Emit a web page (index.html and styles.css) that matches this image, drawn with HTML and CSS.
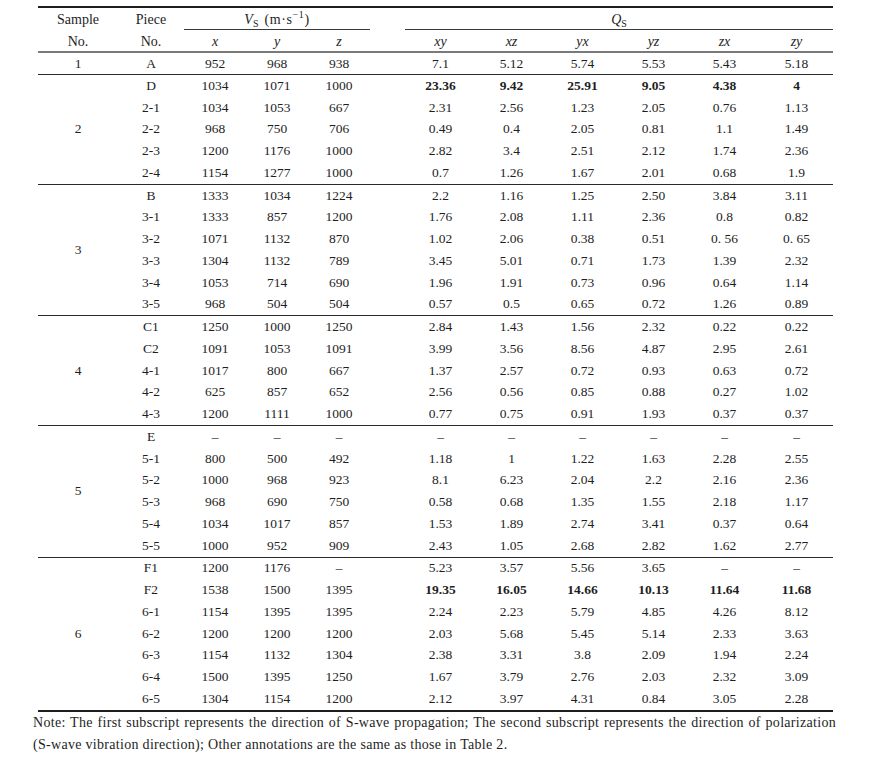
FILE: index.html
```html
<!DOCTYPE html>
<html lang="en">
<head>
<meta charset="utf-8">
<title>Table</title>
<link rel="stylesheet" href="styles.css">
</head>
<body>
<div class="page">
<table class="data">
<colgroup>
<col class="c-sample"><col class="c-piece"><col class="c-v"><col class="c-v"><col class="c-v"><col class="c-gap"><col class="c-q"><col class="c-q"><col class="c-q"><col class="c-q"><col class="c-q"><col class="c-qlast">
</colgroup>
<thead>
<tr class="h1">
<th>Sample</th><th>Piece</th><th colspan="3" class="cmid"><i>V</i><sub>S</sub><span class="unit">(m·s<sup>−1</sup>)</span></th><th></th><th colspan="6" class="cmid"><i>Q</i><sub>S</sub></th>
</tr>
<tr class="h2">
<th>No.</th><th>No.</th><th><i>x</i></th><th><i>y</i></th><th><i>z</i></th><th></th><th><i>xy</i></th><th><i>xz</i></th><th><i>yx</i></th><th><i>yz</i></th><th><i>zx</i></th><th><i>zy</i></th>
</tr>
</thead>
<tbody class="first">
<tr><td>1</td><td>A</td><td>952</td><td>968</td><td>938</td><td></td><td>7.1</td><td>5.12</td><td>5.74</td><td>5.53</td><td>5.43</td><td>5.18</td></tr>
</tbody>
<tbody>
<tr><td rowspan="5">2</td><td>D</td><td>1034</td><td>1071</td><td>1000</td><td></td><td class="b">23.36</td><td class="b">9.42</td><td class="b">25.91</td><td class="b">9.05</td><td class="b">4.38</td><td class="b">4</td></tr>
<tr><td>2-1</td><td>1034</td><td>1053</td><td>667</td><td></td><td>2.31</td><td>2.56</td><td>1.23</td><td>2.05</td><td>0.76</td><td>1.13</td></tr>
<tr><td>2-2</td><td>968</td><td>750</td><td>706</td><td></td><td>0.49</td><td>0.4</td><td>2.05</td><td>0.81</td><td>1.1</td><td>1.49</td></tr>
<tr><td>2-3</td><td>1200</td><td>1176</td><td>1000</td><td></td><td>2.82</td><td>3.4</td><td>2.51</td><td>2.12</td><td>1.74</td><td>2.36</td></tr>
<tr><td>2-4</td><td>1154</td><td>1277</td><td>1000</td><td></td><td>0.7</td><td>1.26</td><td>1.67</td><td>2.01</td><td>0.68</td><td>1.9</td></tr>
</tbody>
<tbody>
<tr><td rowspan="6">3</td><td>B</td><td>1333</td><td>1034</td><td>1224</td><td></td><td>2.2</td><td>1.16</td><td>1.25</td><td>2.50</td><td>3.84</td><td>3.11</td></tr>
<tr><td>3-1</td><td>1333</td><td>857</td><td>1200</td><td></td><td>1.76</td><td>2.08</td><td>1.11</td><td>2.36</td><td>0.8</td><td>0.82</td></tr>
<tr><td>3-2</td><td>1071</td><td>1132</td><td>870</td><td></td><td>1.02</td><td>2.06</td><td>0.38</td><td>0.51</td><td>0. 56</td><td>0. 65</td></tr>
<tr><td>3-3</td><td>1304</td><td>1132</td><td>789</td><td></td><td>3.45</td><td>5.01</td><td>0.71</td><td>1.73</td><td>1.39</td><td>2.32</td></tr>
<tr><td>3-4</td><td>1053</td><td>714</td><td>690</td><td></td><td>1.96</td><td>1.91</td><td>0.73</td><td>0.96</td><td>0.64</td><td>1.14</td></tr>
<tr><td>3-5</td><td>968</td><td>504</td><td>504</td><td></td><td>0.57</td><td>0.5</td><td>0.65</td><td>0.72</td><td>1.26</td><td>0.89</td></tr>
</tbody>
<tbody>
<tr><td rowspan="5">4</td><td>C1</td><td>1250</td><td>1000</td><td>1250</td><td></td><td>2.84</td><td>1.43</td><td>1.56</td><td>2.32</td><td>0.22</td><td>0.22</td></tr>
<tr><td>C2</td><td>1091</td><td>1053</td><td>1091</td><td></td><td>3.99</td><td>3.56</td><td>8.56</td><td>4.87</td><td>2.95</td><td>2.61</td></tr>
<tr><td>4-1</td><td>1017</td><td>800</td><td>667</td><td></td><td>1.37</td><td>2.57</td><td>0.72</td><td>0.93</td><td>0.63</td><td>0.72</td></tr>
<tr><td>4-2</td><td>625</td><td>857</td><td>652</td><td></td><td>2.56</td><td>0.56</td><td>0.85</td><td>0.88</td><td>0.27</td><td>1.02</td></tr>
<tr><td>4-3</td><td>1200</td><td>1111</td><td>1000</td><td></td><td>0.77</td><td>0.75</td><td>0.91</td><td>1.93</td><td>0.37</td><td>0.37</td></tr>
</tbody>
<tbody>
<tr><td rowspan="6">5</td><td>E</td><td>–</td><td>–</td><td>–</td><td></td><td>–</td><td>–</td><td>–</td><td>–</td><td>–</td><td>–</td></tr>
<tr><td>5-1</td><td>800</td><td>500</td><td>492</td><td></td><td>1.18</td><td>1</td><td>1.22</td><td>1.63</td><td>2.28</td><td>2.55</td></tr>
<tr><td>5-2</td><td>1000</td><td>968</td><td>923</td><td></td><td>8.1</td><td>6.23</td><td>2.04</td><td>2.2</td><td>2.16</td><td>2.36</td></tr>
<tr><td>5-3</td><td>968</td><td>690</td><td>750</td><td></td><td>0.58</td><td>0.68</td><td>1.35</td><td>1.55</td><td>2.18</td><td>1.17</td></tr>
<tr><td>5-4</td><td>1034</td><td>1017</td><td>857</td><td></td><td>1.53</td><td>1.89</td><td>2.74</td><td>3.41</td><td>0.37</td><td>0.64</td></tr>
<tr><td>5-5</td><td>1000</td><td>952</td><td>909</td><td></td><td>2.43</td><td>1.05</td><td>2.68</td><td>2.82</td><td>1.62</td><td>2.77</td></tr>
</tbody>
<tbody class="last">
<tr><td rowspan="7">6</td><td>F1</td><td>1200</td><td>1176</td><td>–</td><td></td><td>5.23</td><td>3.57</td><td>5.56</td><td>3.65</td><td>–</td><td>–</td></tr>
<tr><td>F2</td><td>1538</td><td>1500</td><td>1395</td><td></td><td class="b">19.35</td><td class="b">16.05</td><td class="b">14.66</td><td class="b">10.13</td><td class="b">11.64</td><td class="b">11.68</td></tr>
<tr><td>6-1</td><td>1154</td><td>1395</td><td>1395</td><td></td><td>2.24</td><td>2.23</td><td>5.79</td><td>4.85</td><td>4.26</td><td>8.12</td></tr>
<tr><td>6-2</td><td>1200</td><td>1200</td><td>1200</td><td></td><td>2.03</td><td>5.68</td><td>5.45</td><td>5.14</td><td>2.33</td><td>3.63</td></tr>
<tr><td>6-3</td><td>1154</td><td>1132</td><td>1304</td><td></td><td>2.38</td><td>3.31</td><td>3.8</td><td>2.09</td><td>1.94</td><td>2.24</td></tr>
<tr><td>6-4</td><td>1500</td><td>1395</td><td>1250</td><td></td><td>1.67</td><td>3.79</td><td>2.76</td><td>2.03</td><td>2.32</td><td>3.09</td></tr>
<tr><td>6-5</td><td>1304</td><td>1154</td><td>1200</td><td></td><td>2.12</td><td>3.97</td><td>4.31</td><td>0.84</td><td>3.05</td><td>2.28</td></tr>
</tbody>
</table>
<p class="note">Note: The first subscript represents the direction of S-wave propagation; The second subscript represents the direction of polarization (S-wave vibration direction); Other annotations are the same as those in Table 2.</p>
</div>
</body>
</html>
```
FILE: styles.css
```css
html, body {
  margin: 0;
  padding: 0;
  background: #fff;
}
body {
  font-family: "Liberation Serif", "Times New Roman", serif;
  font-size: 13.5px;
  color: #1e1e1e;
}
.page {
  padding: 6px 0 0 33px;
  width: 803px;
}
.data {
  margin-left: 5px;
  width: 795px;
  table-layout: fixed;
  border-collapse: collapse;
  border-top: 2px solid #1e1e1e;
}
.c-sample { width: 80px; }
.c-piece { width: 66px; }
.c-v { width: 62px; }
.c-gap { width: 35px; }
.c-q { width: 71px; }
.c-qlast { width: 73px; }
.data th, .data td {
  padding: 0;
  height: 21.75px;
  line-height: 20px;
  text-align: center;
  font-weight: normal;
  white-space: nowrap;
  vertical-align: middle;
}
.data thead th {
  height: 21px;
  padding-top: 2px;
  line-height: 19px;
  box-sizing: border-box;
  font-size: 14px;
}
.data tbody.first td {
  height: 21px;
}
.data th.cmid {
  border-bottom: 1px solid #3a3a3a;
}
.data thead {
  border-bottom: 2px solid #7a7a7a;
}
.data tbody {
  border-bottom: 1px solid #2a2a2a;
}
.data tbody.last {
  border-bottom: 2px solid #1e1e1e;
}
.data td.b {
  font-weight: bold;
}
.data sub {
  font-size: 10px;
  vertical-align: -3px;
  line-height: 0;
}
.data sup {
  font-size: 10px;
  vertical-align: 6px;
  line-height: 0;
}
.data .unit {
  margin-left: 6px;
  letter-spacing: 0.6px;
}
.data i {
  font-style: italic;
}
.note {
  margin: 0;
  font-size: 14px;
  letter-spacing: 0.3px;
  line-height: 22px;
  text-align: justify;
}
```
